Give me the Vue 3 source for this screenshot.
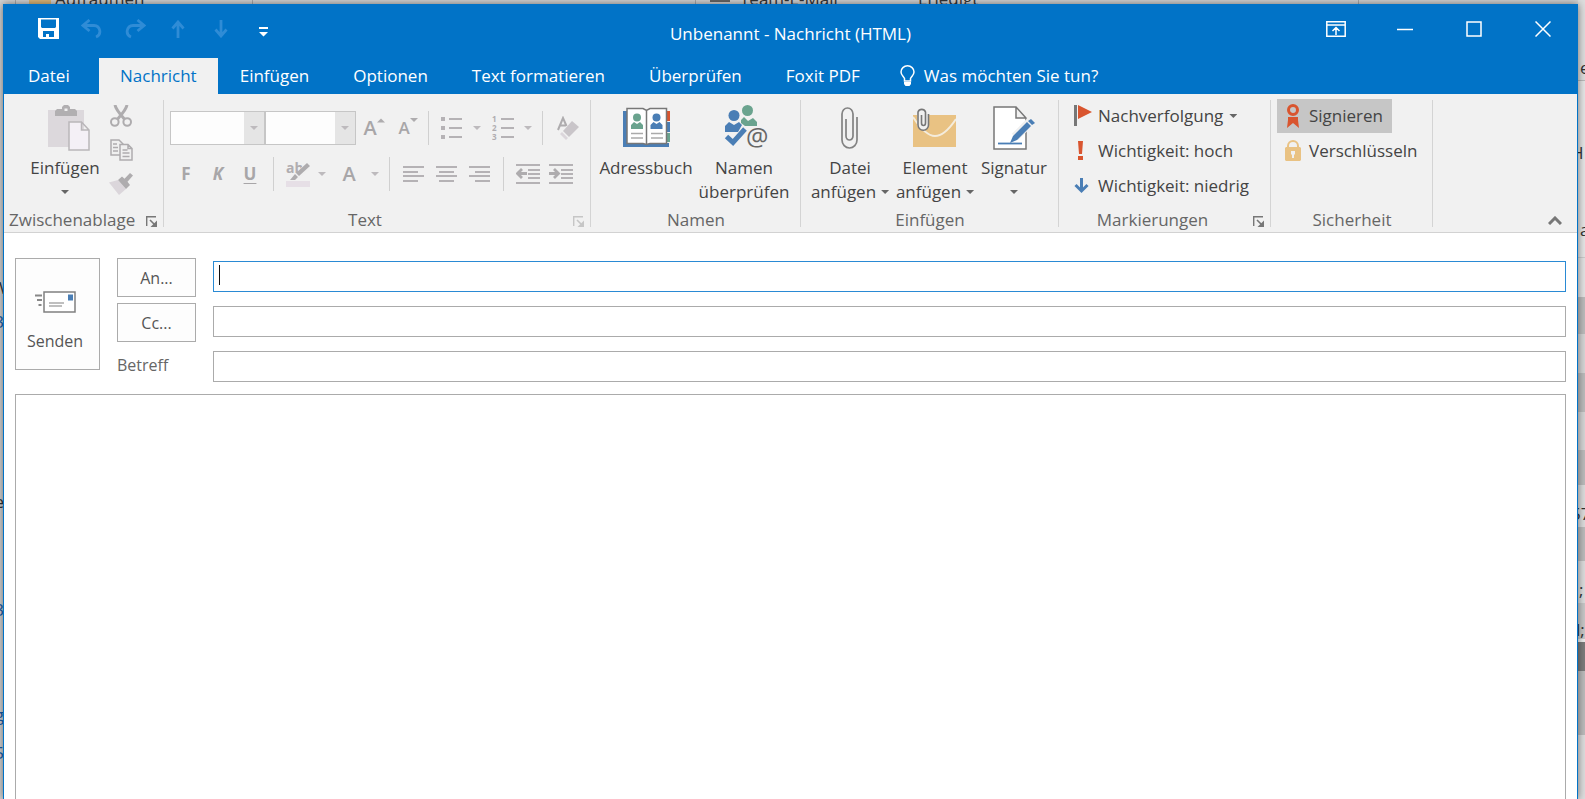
<script setup>
import { ref } from 'vue'

const tabs = ['Einfügen', 'Optionen', 'Text formatieren', 'Überprüfen', 'Foxit PDF']
const to = ref('')
const cc = ref('')
const subject = ref('')
const body = ref('')
</script>

<template>
  <div class="desktop">
    <div class="behind" aria-hidden="true">
      <span class="peek top p-clean">Aufräumen</span>
      <span class="peek top p-team">Team-E-Mail</span>
      <span class="peek top p-done">Erledigt</span>
      <i class="stack"></i><i class="card"></i>
      <i class="vline v1"></i><i class="vline v2"></i><i class="vline v3"></i><i class="vline v4"></i>
      <span class="peek left l1">W</span>
      <span class="peek left blue l2">3</span>
      <span class="peek left l3">e</span>
      <span class="peek left blue l4">3</span>
      <span class="peek left blue l5">g</span>
      <span class="peek left blue l6">5</span>
      <i class="rows"></i>
      <span class="peek r1">er</span>
      <span class="peek r2">H</span>
      <span class="peek r3">a</span>
      <span class="peek r4">57</span>
      <span class="peek r5">;</span>
      <span class="peek r6">l;</span>
    </div>

    <main class="window">
      <header class="titlebar">
        <div class="quick">
          <button aria-label="Speichern">
            <svg width="21" height="21" viewBox="0 0 21 21"><path fill="#fff" fill-rule="evenodd" d="M0 0h21v21H2l-2-2zM3 1.500v7.500l1 1h13l1-1v-7.500zM5 13v6h3v-3h3v3h5v-6z" /></svg>
          </button>
          <button aria-label="Rückgängig" class="dim">
            <svg width="22" height="20" viewBox="0 0 22 20"><path d="M8.500 1 2 6.500 8.500 12M2.500 6.500H13a6.300 6 0 0 1 2 11.500" /></svg>
          </button>
          <button aria-label="Wiederholen" class="dim">
            <svg width="22" height="20" viewBox="0 0 22 20"><path d="M13.500 1 20 6.500 13.500 12M19.500 6.500H9A6.300 6 0 0 0 7 18" /></svg>
          </button>
          <button aria-label="Vorheriges Element" class="dim">
            <svg width="14" height="18" viewBox="0 0 14 18"><path d="M7 18V2M1.500 8.500 7 2l5.500 6.500" /></svg>
          </button>
          <button aria-label="Nächstes Element" class="dim">
            <svg width="14" height="18" viewBox="0 0 14 18"><path d="M7 0v16M1.500 9.500 7 16l5.500-6.500" /></svg>
          </button>
          <button aria-label="Schnellzugriff anpassen">
            <svg class="more" width="9" height="10" viewBox="0 0 9 10"><path fill="#fff" d="M0 0h9v2H0zM0 5h9L4.500 9.500z" /></svg>
          </button>
        </div>
        <h1>Unbenannt - Nachricht (HTML)</h1>
        <div class="controls">
          <button aria-label="Menüband-Anzeigeoptionen">
            <svg width="20" height="16" viewBox="0 0 20 16"><path d="M.8.800h18.400v14.400H.8zM1 4h18M10 14V7M6.500 10 10 6.500l3.500 3.500" /></svg>
          </button>
          <button aria-label="Minimieren">
            <svg width="16" height="16" viewBox="0 0 16 16"><path d="M0 8.500h16" /></svg>
          </button>
          <button aria-label="Maximieren">
            <svg width="16" height="16" viewBox="0 0 16 16"><path d="M1 1h14v14H1z" /></svg>
          </button>
          <button aria-label="Schließen">
            <svg width="16" height="16" viewBox="0 0 16 16"><path d="m.5.500 15 15M15.500.500l-15 15" /></svg>
          </button>
        </div>
      </header>

      <nav class="tabs">
        <button class="file">Datei</button>
        <button class="active">Nachricht</button>
        <button v-for="t in tabs" :key="t">{{ t }}</button>
        <button class="tell">
          <svg width="15" height="22" viewBox="0 0 15 22"><path fill="none" stroke="#fff" stroke-width="1.500" d="M4.500 16v-2.500C3.500 11.500 1 10 1 7a6.500 6.200 0 0 1 13 0c0 3-2.500 4.500-3.500 6.500V16z" /><path fill="#fff" d="M4 17h7v2l-1.500 2h-4L4 19z" /></svg>
          Was möchten Sie tun?
        </button>
      </nav>

      <section class="ribbon" aria-label="Menüband">
        <div class="group g-clip">
          <div class="content">
            <button class="large paste">
              <span class="pic">
                <svg width="42" height="46" viewBox="0 0 42 46"><path fill="#dcd8dc" d="M0 5h36v37H0z" /><path fill="#b1afb1" d="M7 11V6l2-2h5V2l2-2h4l2 2v2h5l2 2v5z" /><path fill="#f0f0f0" d="M16.500 3.500h3V6h-3z" /><path fill="#f4f0f6" stroke="#b9b6b9" stroke-width="1.500" d="M21 17h12.500l7.500 8v20H21zM33.500 17v8H41" /></svg>
              </span>
              <span>Einfügen</span>
              <span class="arrow-row"><i class="arrow"></i></span>
            </button>
            <div class="column">
              <button class="tiny" aria-label="Ausschneiden">
                <svg width="22" height="22" viewBox="0 0 22 22" fill="none" stroke="#aeacae" stroke-width="2"><path d="M5 0c1 5 4 8 9.500 14M17 0c-1 5-4 8-9.500 14" stroke-width="3" /><circle cx="4.800" cy="17" r="3.800" /><circle cx="17.200" cy="17" r="3.800" /></svg>
              </button>
              <button class="tiny" aria-label="Kopieren">
                <svg width="23" height="22" viewBox="0 0 23 22" fill="#f0f0f0" stroke="#aeacae" stroke-width="1.500"><path d="M1 1h8l4 4v11H1z" /><path d="M3 5h4M3 8.500h5M3 12h5" /><path d="M10 5.500h8l4 4V21H10zM18 5.500v4h4M12.500 11h5M12.500 14h7M12.500 17.500h7" /></svg>
              </button>
              <button class="tiny" aria-label="Format übertragen">
                <svg width="24" height="22" viewBox="0 0 24 22"><path fill="#dbd6db" d="M0 9.500 9 7l8 9-7 6z" /><path fill="#aeacae" d="m9 7 4-3.500 2.500 2.300L21 0l3 2.500-5.500 6.300L21 12l-4 4z" /></svg>
              </button>
            </div>
          </div>
          <footer>Zwischenablage<svg class="launch" width="11" height="11" viewBox="0 0 11 11"><path d="M.7 10V.700H10" fill="none" stroke="#777" stroke-width="1.400" /><path d="M4 4l5 5" stroke="#777" stroke-width="1.600" /><path fill="#777" d="M11 4.500V11H4.500z" /></svg></footer>
        </div>

        <div class="group g-text">
          <div class="content format">
            <div class="tools">
              <span class="combo font"><select aria-label="Schriftart" disabled></select></span>
              <span class="combo size"><select aria-label="Schriftgrad" disabled></select></span>
              <button class="tool w36 letter" aria-label="Schrift vergrößern">A<svg width="8" height="20" viewBox="0 0 8 20"><path fill="#aeacae" d="M0 4.500h8L4 .500z" /></svg></button>
              <button class="tool w32 letter less" aria-label="Schrift verkleinern">A<svg width="8" height="20" viewBox="0 0 8 20"><path fill="#aeacae" d="M0 0h8L4 4z" /></svg></button>
              <i class="bar slim"></i>
              <button class="tool w36" aria-label="Aufzählungszeichen">
                <svg width="21" height="24" viewBox="0 0 21 24" fill="#b5b2b5"><path d="M0 1h4v4H0zM0 10h4v4H0zM0 19h4v4H0zM8 2h13v2H8zM8 11h13v2H8zM8 20h13v2H8z" /></svg>
              </button>
              <button class="tool w16" aria-label="Aufzählungsoptionen"><i class="arrow pale"></i></button>
              <button class="tool w36" aria-label="Nummerierung">
                <svg width="22" height="24" viewBox="0 0 22 24" fill="#b5b2b5"><path d="M9 2h13v2H9zM9 11h13v2H9zM9 20h13v2H9z" /><text x="0" y="6">1</text><text x="0" y="15">2</text><text x="0" y="24">3</text></svg>
              </button>
              <button class="tool w14" aria-label="Nummerierungsoptionen"><i class="arrow pale"></i></button>
              <i class="bar"></i>
              <button class="tool w36" aria-label="Formatierung löschen">
                <svg width="22" height="24" viewBox="0 0 22 24"><path fill="none" stroke="#aeacae" stroke-width="2" d="M1 14 6 2l3.500 8M3 9.500h6" /><path fill="#c9c5c9" d="m15 5 7 6-10 10-6-6z" /><path fill="#dbd6db" d="m5 16 6 6-2 2-6-6z" /></svg>
              </button>
            </div>
            <div class="tools">
              <button class="tool w32 glyph" aria-label="Fett">F</button>
              <button class="tool w32 glyph italic" aria-label="Kursiv">K</button>
              <button class="tool w32 glyph under" aria-label="Unterstrichen">U</button>
              <i class="bar"></i>
              <button class="tool w33" aria-label="Texthervorhebungsfarbe">
                <svg width="24" height="25" viewBox="0 0 24 25"><path fill="#e6dfe6" d="M0 19h24v6H0z" /><text class="ab" x="0" y="11">ab</text><path fill="#f0f0f0" d="M19 1h5v6L12 17H6z" /><path fill="#aeacae" d="m21 1 3 3L13 14l-3-3zM9 12l3 3-3 3H4z" /></svg>
              </button>
              <button class="tool w16" aria-label="Hervorhebungsoptionen"><i class="arrow pale"></i></button>
              <button class="tool w38 letter" aria-label="Schriftfarbe">A</button>
              <button class="tool w14" aria-label="Schriftfarboptionen"><i class="arrow pale"></i></button>
              <i class="bar"></i>
              <button class="tool w33" aria-label="Linksbündig"><svg width="21" height="16" viewBox="0 0 21 16"><path fill="#b5b2b5" d="M0 0h21v2H0zM0 5h15v2H0zM0 9h21v2H0zM0 14h15v2H0z" /></svg></button>
              <button class="tool w33" aria-label="Zentriert"><svg width="21" height="16" viewBox="0 0 21 16"><path fill="#b5b2b5" d="M0 0h21v2H0zM3 5h15v2H3zM0 9h21v2H0zM3 14h15v2H3z" /></svg></button>
              <button class="tool w33" aria-label="Rechtsbündig"><svg width="21" height="16" viewBox="0 0 21 16"><path fill="#b5b2b5" d="M0 0h21v2H0zM6 5h15v2H6zM0 9h21v2H0zM6 14h15v2H6z" /></svg></button>
              <i class="bar"></i>
              <button class="tool w33" aria-label="Einzug verkleinern"><svg width="24" height="20" viewBox="0 0 24 20"><path fill="#b5b2b5" d="M0 0h24v2H0zM12 5h12v2H12zM12 9h12v2H12zM12 13h12v2H12zM0 18h24v2H0z" /><path fill="none" stroke="#aeacae" stroke-width="2.800" d="M11 9.500H1.500M6 5 1.500 9.500 6 14" /></svg></button>
              <button class="tool w33" aria-label="Einzug vergrößern"><svg width="24" height="20" viewBox="0 0 24 20"><path fill="#b5b2b5" d="M0 0h24v2H0zM12 5h12v2H12zM12 9h12v2H12zM12 13h12v2H12zM0 18h24v2H0z" /><path fill="none" stroke="#aeacae" stroke-width="2.800" d="M0 9.500h9.500M5 5l4.500 4.500L5 14" /></svg></button>
            </div>
          </div>
          <footer>Text<svg class="launch" width="11" height="11" viewBox="0 0 11 11"><path d="M.7 10V.700H10" fill="none" stroke="#c6c6c6" stroke-width="1.400" /><path d="M4 4l5 5" stroke="#c6c6c6" stroke-width="1.600" /><path fill="#c6c6c6" d="M11 4.500V11H4.500z" /></svg></footer>
        </div>

        <div class="group g-names">
          <div class="content">
            <button class="large address">
              <span class="pic">
                <svg width="47" height="41" viewBox="0 0 47 41"><path fill="#4a7eb5" d="M0 4h6v32h40v4H0z" /><path fill="#d9552f" d="M43 4h4v10h-4z" /><path fill="#4a7eb5" d="M43 15h4v10h-4z" /><path fill="#6aa38e" d="M43 26h4v9h-4z" /><path fill="#fff" stroke="#777" stroke-width="1.500" d="M4 1.500h16l3.500 2 3.500-2h16.500v35H27l-3.500 1-3.500-1H4zM23.500 3v34" /><g fill="#6aa38e"><circle cx="14" cy="10.500" r="4" /><path d="M8 22v-4l3-3 3 2 3-2 3 3v4z" /></g><g fill="#4a7eb5"><circle cx="33.500" cy="10.500" r="4" /><path d="M27.500 22v-4l3-3 3 2 3-2 3 3v4z" /></g><path stroke="#aaa" stroke-width="1.500" d="M8 26.500h12M8 31h12M28 26.500h12M28 31h12" /></svg>
              </span>
              <span>Adressbuch</span>
            </button>
            <button class="large check">
              <span class="pic">
                <svg width="46" height="46" viewBox="0 0 46 46"><circle cx="23.500" cy="5.500" r="5.500" fill="#6aa38e" /><path fill="#6aa38e" d="m17 15 3-3 4 4 5-3 4 4v4H21l-4-3z" /><circle cx="10" cy="10.500" r="5.500" fill="#4a7eb5" /><path fill="#4a7eb5" d="M1 27v-6l4-4 5 3 5-3 3 3-4 7z" /><path fill="none" stroke="#4a7eb5" stroke-width="5" d="m2.500 31.500 6.500 6L21 24" /><text class="at" x="22" y="41">@</text></svg>
              </span>
              <span>Namen</span>
              <span>überprüfen</span>
            </button>
          </div>
          <footer>Namen</footer>
        </div>

        <div class="group g-insert">
          <div class="content">
            <button class="large attach">
              <span class="pic">
                <svg width="17" height="42" viewBox="0 0 17 42"><path fill="none" stroke="#828282" stroke-width="1.700" d="M12 11v18a3.500 4 0 0 1-7 0M1 14v19a7.500 8 0 0 0 15 0V10M1 14V7a5.500 6 0 0 1 11 0v4M5 29V12" /></svg>
              </span>
              <span>Datei</span>
              <span>anfügen<i class="arrow after"></i></span>
            </button>
            <button class="large item">
              <span class="pic">
                <svg width="43" height="42" viewBox="0 0 43 42"><path fill="#e9c283" d="M0 8h43v32H0z" /><path fill="none" stroke="#f4ecdc" stroke-width="2" d="M0 10c9 14 16 19 22 19s13-5 21-17" /><path fill="#f0f0f0" d="M4 5h12v14l-3 4H8l-4-4z" /><path fill="none" stroke="#777" stroke-width="1.600" d="M12.500 8v8a2 2.500 0 0 1-4 0V8M5 8v10a5 5 0 0 0 10.500 0V7M5 8V5a4 4 0 0 1 7.500 0v3" /></svg>
              </span>
              <span>Element</span>
              <span>anfügen<i class="arrow after"></i></span>
            </button>
            <button class="large sign">
              <span class="pic">
                <svg width="42" height="44" viewBox="0 0 42 44"><path fill="#fff" stroke="#777" stroke-width="1.500" d="M1 1h22l10 11v31H1zM23 1v11h10" /><path stroke="#4a7eb5" stroke-width="1.800" d="M5 37.500h24" /><path stroke="#f0f0f0" stroke-width="9" d="M22 31 38 15" /><path fill="#4a7eb5" d="m34 16 4 4-14 14-7 3 3-7zM35 15l3-2 4 4-3 2z" /></svg>
              </span>
              <span>Signatur</span>
              <span class="arrow-row"><i class="arrow"></i></span>
            </button>
          </div>
          <footer>Einfügen</footer>
        </div>

        <div class="group g-marks">
          <div class="content column lines">
            <button class="line">
              <svg width="20" height="22" viewBox="0 0 20 22"><path fill="#777" d="M2 0h3v21H2z" /><path fill="#d9552f" d="M6 0l14 7L6 14z" /></svg>
              Nachverfolgung<i class="arrow after"></i>
            </button>
            <button class="line">
              <svg width="20" height="20" viewBox="0 0 20 20"><path fill="#d9552f" d="M6 0h5l-1 13H7zM6 15h5v4H6z" /></svg>
              Wichtigkeit: hoch
            </button>
            <button class="line">
              <svg width="20" height="18" viewBox="0 0 20 18"><path fill="none" stroke="#4a7eb5" stroke-width="3" d="M9.500 1v13M3.500 8l6 6 6-6" /></svg>
              Wichtigkeit: niedrig
            </button>
          </div>
          <footer>Markierungen<svg class="launch" width="11" height="11" viewBox="0 0 11 11"><path d="M.7 10V.700H10" fill="none" stroke="#777" stroke-width="1.400" /><path d="M4 4l5 5" stroke="#777" stroke-width="1.600" /><path fill="#777" d="M11 4.500V11H4.500z" /></svg></footer>
        </div>

        <div class="group g-safe">
          <div class="content column lines">
            <button class="line pressed">
              <svg width="18" height="24" viewBox="0 0 18 24"><circle cx="9" cy="6" r="4.500" fill="none" stroke="#d9552f" stroke-width="3" /><path fill="#d9552f" d="M4 13h10v3l1 8-6-5-6 5 1-8z" /></svg>
              Signieren
            </button>
            <button class="line">
              <svg width="18" height="22" viewBox="0 0 18 22"><path fill="none" stroke="#e9c283" stroke-width="2" d="M4 9V6a5 5 0 0 1 10 0v3" /><path fill="#e9c283" d="M2 7h14l1 1v12l-1 1H2l-1-1V8z" /><path fill="#f0f0f0" d="M7 11h4v3l-1 1v3H8v-3l-1-1z" /></svg>
              Verschlüsseln
            </button>
          </div>
          <footer>Sicherheit</footer>
        </div>

        <button class="collapse" aria-label="Menüband reduzieren">
          <svg width="14" height="9" viewBox="0 0 14 9"><path fill="none" stroke="#777" stroke-width="3" d="m1 8 6-6 6 6" /></svg>
        </button>
      </section>

      <form class="mail" @submit.prevent>
        <button class="box send" type="submit">
          <svg width="41" height="22" viewBox="0 0 41 22"><path fill="#fff" stroke="#808080" stroke-width="1.500" d="M9 1h31v20H9z" /><path fill="#4a7eb5" d="M33 3.500h5v6h-5z" /><path stroke="#aaa" stroke-width="1.500" d="M14 12h15M14 15h13" /><path stroke="#888" stroke-width="2" d="M0 4.500h7M2 9h5M3.500 14h3" /></svg>
          Senden
        </button>
        <button class="box" type="button">An...</button>
        <span class="field first"><input v-model="to" aria-label="An" type="text" /></span>
        <button class="box" type="button">Cc...</button>
        <span class="field"><input v-model="cc" aria-label="Cc" type="text" /></span>
        <label for="subject">Betreff</label>
        <span class="field"><input id="subject" v-model="subject" type="text" /></span>
        <textarea v-model="body" aria-label="Nachricht"></textarea>
      </form>
    </main>
  </div>
</template>

<style>
body { overflow: hidden; }
</style>

<style scoped>
* { box-sizing: border-box; }
.desktop {
  position: relative;
  height: 100vh;
  padding-top: 4px;
  overflow: hidden;
  background: #d4d4d4;
  font: 17px/24px "Open Sans", "Noto Sans", sans-serif;
  color: #444;
}
button {
  margin: 0;
  padding: 0;
  border: 0;
  background: none;
  font: inherit;
  color: inherit;
}
svg { display: block; flex: none; }

.behind { position: absolute; inset: 0; }
.peek { position: absolute; line-height: 20px; white-space: nowrap; color: #333; }
.top { top: -11px; }
.p-clean { left: 55px; }
.p-team { left: 740px; }
.p-done { left: 918px; }
.stack { position: absolute; left: 29px; top: 0; width: 22px; height: 4px; background: #dfb878; }
.card { position: absolute; left: 710px; top: 0; width: 20px; height: 2px; background: #666; }
.vline { position: absolute; top: 0; width: 1px; height: 4px; background: #aaa; }
.v1 { left: 15px; }
.v2 { left: 252px; }
.v3 { left: 695px; }
.v4 { left: 1358px; }
.left { left: -8px; width: 12px; text-align: right; }
.blue { color: #1b5faa; }
.l1 { top: 278px; }
.l2 { top: 312px; }
.l3 { top: 492px; }
.l4 { top: 600px; }
.l5 { top: 705px; text-decoration: underline; }
.l6 { top: 743px; }
.rows {
  position: absolute;
  top: 0;
  right: 0;
  bottom: 0;
  width: 7px;
  background: linear-gradient(#dedede 80px, #bbb 80px 81px, #e6e6e6 81px 257px, #ccc 257px 258px, #e4e4e4 258px 297px, #bcbcbc 297px 334px, #d6d6d6 334px 373px, #bcbcbc 373px 412px, #d6d6d6 412px 450px, #bcbcbc 450px 485px, #ddd 485px 527px, #bcbcbc 527px 561px, #ddd 561px 603px, #c8c8c8 603px 639px, #eee 639px 642px, #7c7c7c 642px 671px, #bcbcbc 671px 735px, #dedede 735px);
}
.r1 { left: 1580px; top: 58px; }
.r2 { left: 1571px; top: 143px; }
.r3 { left: 1580px; top: 220px; }
.r4 { left: 1571px; top: 504px; }
.r5 { left: 1579px; top: 580px; }
.r6 { left: 1576px; top: 620px; }

.window {
  position: relative;
  display: flex;
  flex-direction: column;
  height: 100%;
  margin: 0 7px 0 3px;
  border: 0 solid #0173c7;
  border-width: 0 1px;
  background: #fff;
  box-shadow: 0 0 8px rgba(0, 0, 0, .5);
}

.titlebar {
  display: grid;
  grid-template-columns: 1fr auto 1fr;
  height: 54px;
  background: #0173c7;
  color: #fff;
}
.titlebar h1 { margin: 0; padding-top: 18px; font-size: 17px; font-weight: 400; }
.quick, .controls { display: flex; height: 49px; }
.quick { padding-left: 23px; }
.controls { justify-content: flex-end; }
.quick button, .controls button { display: grid; place-items: center; }
.quick button { width: 43px; }
.controls button { width: 69px; }
.controls path { fill: none; stroke: #fff; stroke-width: 1.500; }
.dim path { fill: none; stroke: #2f8cd6; stroke-width: 2.800; }
.more { margin-top: 6px; }

.tabs { display: flex; height: 36px; background: #0173c7; color: #fff; }
.tabs button { padding: 0 22px; white-space: nowrap; }
.tabs .file { width: 95px; padding: 0 24px; text-align: left; }
.tabs .active { padding: 0 21px; background: #f1f1f1; color: #0173c7; }
.tabs .tell { display: flex; align-items: center; gap: 9px; padding-left: 18px; }

.ribbon {
  display: flex;
  height: 139px;
  flex: none;
  border-bottom: 1px solid #d2d2d2;
  background: #f1f1f1;
}
.group {
  position: relative;
  display: flex;
  flex-direction: column;
  flex: none;
  padding-top: 5px;
}
.group::after {
  content: "";
  position: absolute;
  right: 0;
  top: 6px;
  bottom: 5px;
  width: 1px;
  background: #d4d4d4;
}
.content { display: flex; flex: 1; }
.column { display: flex; flex-direction: column; align-items: flex-start; }
.lines { gap: 1px; }
.group footer {
  position: relative;
  height: 24px;
  padding: 0 5px;
  text-align: center;
  color: #666;
}
.launch { position: absolute; right: 7px; top: 8px; }
.g-clip { width: 160px; }
.g-clip footer { text-align: left; }
.g-text { width: 427px; }
.g-names { width: 210px; }
.g-insert { width: 258px; }
.g-marks { width: 212px; }
.g-text footer, .g-marks footer { padding-right: 30px; }
.g-safe { width: 162px; }

.large { display: flex; flex-direction: column; align-items: center; white-space: nowrap; }
.pic { display: grid; place-items: center; height: 57px; }
.arrow-row { display: grid; place-items: center; height: 24px; }
.arrow {
  display: inline-block;
  width: 8px;
  height: 4px;
  background: #666;
  clip-path: polygon(0 0, 100% 0, 50% 100%);
}
.after { margin-left: 5px; vertical-align: 4px; }
.pale { background: #bdbabd; }
.paste { width: 86px; margin-left: 18px; }
.paste .pic { padding-left: 8px; }
.tiny { display: grid; place-items: center; width: 26px; height: 34px; }
.address { width: 94px; margin-left: 8px; }
.check { width: 102px; }
.check .pic { padding-left: 6px; }
.attach { width: 84px; margin-left: 7px; }
.item { width: 86px; }
.sign { width: 72px; }
.attach .pic, .item .pic { padding-right: 2px; }

.format { flex-direction: column; gap: 12px; padding: 12px 0 0 6px; }
.tools { display: flex; height: 34px; }
.combo { display: flex; position: relative; border: 1px solid #c6c6c6; background: #fdfdfd; }
.combo::before { content: ""; position: absolute; right: 0; top: 0; bottom: 0; width: 20px; background: #e5e5e5; }
.combo::after {
  content: "";
  position: absolute;
  right: 6px;
  top: 14px;
  width: 8px;
  height: 4px;
  background: #bdbabd;
  clip-path: polygon(0 0, 100% 0, 50% 100%);
}
.combo select { width: 100%; border: 0; background: none; appearance: none; }
.font { width: 95px; }
.size { width: 91px; }
.tool { display: flex; align-items: center; justify-content: center; color: #a8a6a8; }
.w14 { width: 14px; }
.w16 { width: 16px; }
.w32 { width: 32px; }
.w33 { width: 33px; }
.w36 { width: 36px; }
.w38 { width: 38px; }
.letter { font-size: 20px; font-weight: 600; }
.less { font-size: 17px; }
.glyph { font-size: 17px; font-weight: 700; }
.italic { font-style: italic; }
.under { text-decoration: underline; text-underline-offset: 3px; }
.bar { width: 1px; margin: 0 7px; background: #d0d0d0; }
.slim { margin: 0 4px; }
text { font-size: 8px; font-weight: 700; fill: #b0adb0; }
.ab { font-size: 14px; }
.at { font-size: 25px; font-weight: 400; fill: #666; }

.line { display: flex; align-items: center; gap: 6px; height: 34px; white-space: nowrap; }
.g-marks .line { margin-left: 13px; }
.g-marks .after { margin-left: 0; }
.g-safe .line { gap: 7px; margin-left: 6px; padding: 0 9px 0 7px; }
.pressed { background: #c6c6c6; }
.collapse { margin: auto 15px 7px auto; }

.mail {
  display: grid;
  flex: 1;
  grid-template: 39px 39px 40px 1fr / 85px 79px 1fr;
  gap: 6px 17px;
  padding: 25px 11px 0;
  color: #555;
  font-size: 16px;
}
.box { border: 1px solid #ababab; background: #fdfdfd; }
.send {
  display: flex;
  flex-direction: column;
  grid-row: 1 / 4;
  align-items: center;
  height: 112px;
  padding: 32px 5px 0 0;
  gap: 16px;
}
.mail label { padding-top: 5px; color: #666; }
.field { position: relative; display: flex; align-self: start; height: 31px; margin-top: 3px; }
.field input {
  width: 100%;
  padding: 0 6px;
  border: 1px solid #ababab;
  outline: 0;
  background: #fff;
  font: inherit;
}
.first input { border-color: #2a8ad4; }
.first::after { content: ""; position: absolute; left: 6px; top: 4px; width: 1px; height: 20px; background: #111; }
textarea {
  grid-column: 1 / -1;
  border: 1px solid #ababab;
  border-bottom: 0;
  outline: 0;
  background: #fff;
  font: inherit;
  resize: none;
}
</style>
